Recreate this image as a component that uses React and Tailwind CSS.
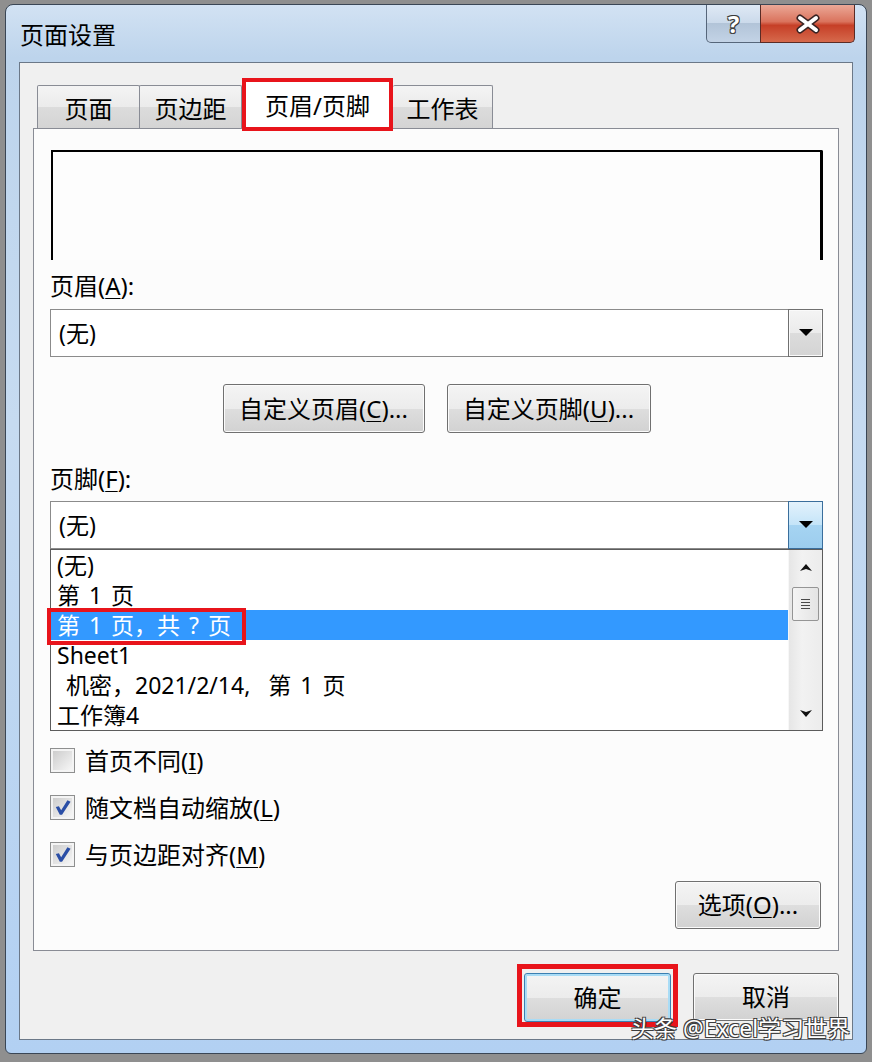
import React from 'react';

const Ul = ({ children }) => (
  <u className="underline decoration-1 underline-offset-[3px]">{children}</u>
);

const WinButton = ({ children, className = '', focused = false }) => (
  <div
    className={`flex items-center justify-center rounded-[3px] border bg-[linear-gradient(#f4f4f4_0%,#ececec_50%,#dedede_50%,#d2d2d2_100%)] text-[24px] leading-none text-black ${
      focused
        ? 'border-[#3c7fb1] shadow-[inset_0_0_0_2px_#a9dcf6]'
        : 'border-[#707070] shadow-[inset_0_0_0_1px_#fbfbfb]'
    } ${className}`}
  >
    {children}
  </div>
);

const DownTri = () => (
  <svg width="14" height="8" viewBox="0 0 14 8">
    <polygon points="0,0 14,0 7,7" fill="#000" />
  </svg>
);

const Combo = ({ focused = false }) => (
  <div className="flex h-[48px] items-center border border-[#8b8b8b] bg-white">
    <span className="pl-[8px] text-[23px] leading-none">(无)</span>
    <div
      className={`-my-px -mr-px ml-auto flex h-[48px] w-[35px] items-center justify-center border ${
        focused
          ? 'border-[#3a6e9c] bg-[linear-gradient(#e3f2fc_0%,#c4e4f8_50%,#a6d4f2_50%,#9ccdee_100%)]'
          : 'border-[#707070] bg-[linear-gradient(#f4f4f4_0%,#ebebeb_50%,#dcdcdc_50%,#d4d4d4_100%)] shadow-[inset_0_0_0_1px_#fafafa]'
      }`}
    >
      <DownTri />
    </div>
  </div>
);

const CheckBox = ({ checked, children }) => (
  <div className="flex h-[25px] items-center gap-[10px]">
    <div className="h-[25px] w-[25px] border border-[#8e8f8f] bg-[#f4f4f4] p-[2px]">
      <div className="flex h-full w-full items-center justify-center bg-[linear-gradient(135deg,#cdcdcd,#f6f6f6)]">
        {checked && (
          <svg width="17" height="17" viewBox="0 0 19 19">
            <polygon points="2,9 5.5,8 8,12.5 15,1.5 18.5,3 9,17.5 6.5,17.5" fill="#2a4ea6" />
          </svg>
        )}
      </div>
    </div>
    <span className="text-[24px] leading-none text-black">{children}</span>
  </div>
);

const listItems = ['(无)', '第 1 页', '第 1 页，共 ? 页', 'Sheet1', ' 机密，2021/2/14,  第 1 页', '工作簿4'];

const FooterList = () => (
  <div className="flex h-[182px] border border-[#5c5c5c] bg-white">
    <div className="flex w-[737px] flex-col">
      {listItems.map((item, i) => (
        <div
          key={i}
          className={`relative h-[30px] whitespace-pre pl-[6px] text-[23px] leading-[30px] [word-spacing:3px] ${
            i === 2 ? 'bg-[#3399ff] text-white' : 'text-black'
          }`}
        >
          {item}
          {i === 2 && (
            <div className="absolute -top-[2px] -left-[4px] h-[37px] w-[199px] border-4 border-[#e8141b]" />
          )}
        </div>
      ))}
    </div>
    {/* scrollbar */}
    <div className="flex w-[34px] flex-col items-center border-l border-[#f7f7f7] bg-[linear-gradient(90deg,#e6e6e6,#f2f2f2_40%,#ececec)]">
      <div className="flex h-[35px] items-center justify-center">
        <svg width="12" height="8" viewBox="0 0 12 8">
          <polygon points="0,7 6,0 12,7 6,5" fill="#111" />
        </svg>
      </div>
      <div className="mt-[2px] flex h-[34px] w-[27px] flex-col items-center justify-center gap-[2px] rounded-[2px] border border-[#959595] bg-[linear-gradient(90deg,#f4f4f4,#e4e4e4)]">
        <div className="h-px w-[9px] bg-[#4a4a4a]" />
        <div className="h-px w-[9px] bg-[#4a4a4a]" />
        <div className="h-px w-[9px] bg-[#4a4a4a]" />
        <div className="h-px w-[9px] bg-[#4a4a4a]" />
      </div>
      <div className="flex-1" />
      <div className="flex h-[35px] items-center justify-center">
        <svg width="12" height="8" viewBox="0 0 12 8">
          <polygon points="0,1 6,8 12,1 6,3" fill="#111" />
        </svg>
      </div>
    </div>
  </div>
);

export default function App() {
  return (
    <div className="relative h-[1062px] w-[872px] overflow-hidden bg-[#8f8f8f] pt-[4px] pl-[5px] font-['Noto_Sans','Noto_Sans_CJK_SC',sans-serif]">
      {/* window */}
      <div className="flex h-[1050px] w-[862px] flex-col rounded-t-[8px] rounded-b-[6px] border border-[#3a4655] bg-[linear-gradient(180deg,#d2e2f3_0%,#bdd4ec_5%,#c6dbf1_40%,#b2d0f2_100%)]">
        {/* title bar */}
        <div className="flex h-[57px] items-start justify-between">
          <span className="mt-[15px] pl-[14px] text-[24px] leading-[30px] text-black">页面设置</span>
          <div className="mr-[11px] flex h-[38px]">
            <div className="flex w-[55px] items-center justify-center rounded-bl-[5px] border border-t-0 border-[#56667a] bg-[linear-gradient(#dfe9f5_0%,#cad9ea_50%,#b2c4d8_50%,#c3d3e6_100%)]">
              <span className="text-[24px] leading-none font-bold text-white [text-shadow:-1px_-1px_0_#3b3b3b,1px_-1px_0_#3b3b3b,-1px_1px_0_#3b3b3b,1px_1px_0_#3b3b3b]">
                ?
              </span>
            </div>
            <div className="-ml-px flex w-[95px] items-center justify-center rounded-br-[5px] border border-t-0 border-[#5a2b25] bg-[linear-gradient(#eba897_0%,#da735d_45%,#c63f27_55%,#d6694c_100%)]">
              <svg width="26" height="20" viewBox="0 0 26 20">
                <g strokeLinecap="round">
                  <line x1="5" y1="4" x2="21" y2="16" stroke="#3a2424" strokeWidth="7" />
                  <line x1="21" y1="4" x2="5" y2="16" stroke="#3a2424" strokeWidth="7" />
                  <line x1="5" y1="4" x2="21" y2="16" stroke="#fff" strokeWidth="4" />
                  <line x1="21" y1="4" x2="5" y2="16" stroke="#fff" strokeWidth="4" />
                </g>
              </svg>
            </div>
          </div>
        </div>

        {/* client area */}
        <div className="mx-[13px] flex h-[978px] flex-col border border-[#6b7888] bg-[#f0f0f0] px-[13px]">
          {/* tabs */}
          <div className="mt-[15px] ml-[4px] flex h-[50px] items-end text-[24px] leading-none text-black">
            <div className="flex h-[43px] w-[103px] items-center justify-center rounded-t-[2px] border border-b-0 border-[#898c95] bg-[linear-gradient(#f4f4f4_0%,#ebebeb_50%,#dcdcdc_50%,#d4d4d4_100%)] pt-[4px]">
              页面
            </div>
            <div className="-ml-px flex h-[43px] w-[103px] items-center justify-center rounded-t-[2px] border border-b-0 border-[#898c95] bg-[linear-gradient(#f4f4f4_0%,#ebebeb_50%,#dcdcdc_50%,#d4d4d4_100%)] pt-[4px]">
              页边距
            </div>
            <div className="relative z-10 -mb-[3px] flex h-[53px] w-[151px] items-center justify-center border-4 border-[#e8141b] bg-white pt-[3px]">
              页眉/页脚
            </div>
            <div className="flex h-[43px] w-[100px] items-center justify-center rounded-t-[2px] border border-b-0 border-l-0 border-[#898c95] bg-[linear-gradient(#f4f4f4_0%,#ebebeb_50%,#dcdcdc_50%,#d4d4d4_100%)] pt-[4px]">
              工作表
            </div>
          </div>

          {/* panel */}
          <div className="flex h-[823px] flex-col border border-[#898c95] bg-[#fcfcfc] pr-[15px] pl-[16px] text-black">
            <div className="mt-[21px] ml-px h-[110px] rounded-tr-[2px] border-t-2 border-r-[3px] border-l-2 border-black bg-[#fdfdfd]" />

            <div className="mt-[11px] text-[24px] leading-[30px]">
              页眉(<Ul>A</Ul>):
            </div>
            <div className="mt-[8px]">
              <Combo />
            </div>

            <div className="mt-[27px] flex justify-center gap-[22px]">
              <WinButton className="h-[49px] w-[202px]">
                自定义页眉(<Ul>C</Ul>)...
              </WinButton>
              <WinButton className="h-[49px] w-[204px]">
                自定义页脚(<Ul>U</Ul>)...
              </WinButton>
            </div>

            <div className="mt-[31px] text-[24px] leading-[30px]">
              页脚(<Ul>F</Ul>):
            </div>
            <div className="mt-[7px]">
              <Combo focused />
            </div>
            <FooterList />

            <div className="mt-[17px] flex flex-col gap-[22px]">
              <CheckBox checked={false}>
                首页不同(<Ul>I</Ul>)
              </CheckBox>
              <CheckBox checked>
                随文档自动缩放(<Ul>L</Ul>)
              </CheckBox>
              <CheckBox checked>
                与页边距对齐(<Ul>M</Ul>)
              </CheckBox>
            </div>

            <div className="mt-[14px] flex justify-end pr-[2px]">
              <WinButton className="h-[48px] w-[146px]">
                选项(<Ul>O</Ul>)...
              </WinButton>
            </div>
          </div>

          {/* dialog buttons */}
          <div className="mt-[22px] flex justify-end gap-[22px]">
            <div className="relative">
              <WinButton focused className="h-[49px] w-[147px]">
                确定
              </WinButton>
              <div className="absolute -top-[9px] -right-[7px] -bottom-[5px] -left-[7px] border-[5px] border-[#e8141b]" />
            </div>
            <WinButton className="h-[48px] w-[146px]">取消</WinButton>
          </div>
        </div>
        <div className="flex-1" />
      </div>

      {/* watermark */}
      <div className="absolute top-[1013px] left-[631px] text-[23px] leading-[30px] whitespace-pre text-white [text-shadow:-1px_-1px_0_#3d3d3d,1px_-1px_0_#3d3d3d,-1px_1px_0_#3d3d3d,1px_1px_0_#3d3d3d]">
        头条 @Excel学习世界
      </div>
    </div>
  );
}
